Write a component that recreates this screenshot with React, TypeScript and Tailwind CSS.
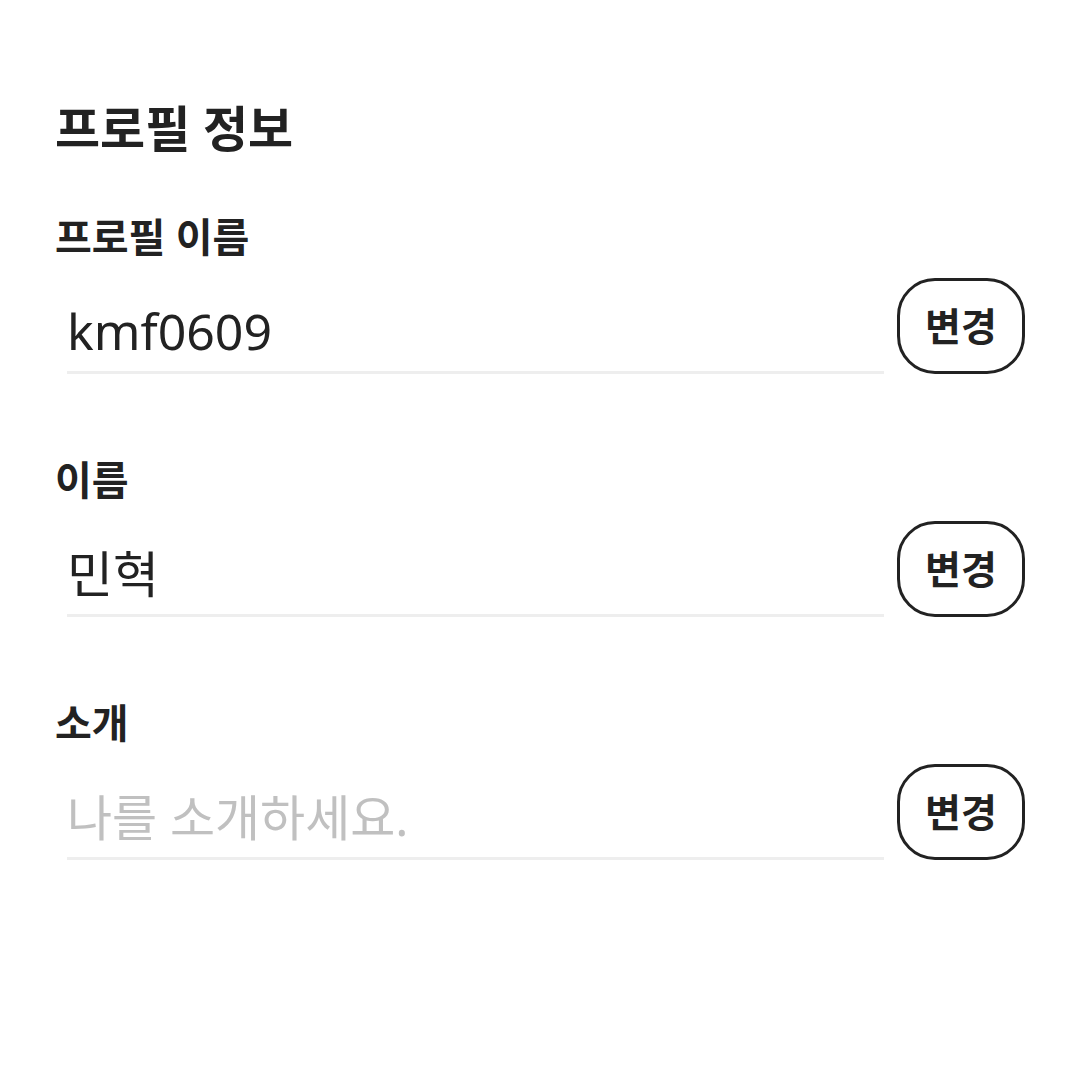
import React from 'react'

const font = { fontFamily: '"Noto Sans", "Noto Sans CJK KR", sans-serif' }

interface FieldProps {
  label: string
  value: string
  placeholder?: string
}

function Field({ label, value, placeholder }: FieldProps) {
  const empty = value.length === 0
  return (
    <section>
      <h2 className="text-[40px] font-semibold leading-[48px] text-[#222222]">{label}</h2>
      <div className="mt-[17px] flex h-[96px] items-end">
        <div className="ml-[12px] mr-[13px] flex-1 border-b-[3px] border-[#eeeeee]">
          <div
            className={
              'h-[93px] pt-[16px] leading-[74px] ' +
              (empty ? 'text-[49px] text-[#c0c0c0]' : 'text-[50px] text-[#222222]')
            }
          >
            {empty ? placeholder : value}
          </div>
        </div>
        <button className="flex h-[96px] w-[128px] items-center justify-center rounded-[38px] border-[3px] border-[#222222] bg-white text-[39px] font-bold text-[#222222]">
          변경
        </button>
      </div>
    </section>
  )
}

export default function App() {
  return (
    <div className="min-h-[1080px] w-[1080px] bg-white px-[55px] pt-[100px]" style={font}>
      <h1 className="text-[49px] font-bold leading-[56px] text-[#222222]">프로필 정보</h1>
      <div className="mt-[57px] flex flex-col gap-[82px]">
        <Field label="프로필 이름" value="kmf0609" />
        <Field label="이름" value="민혁" />
        <Field label="소개" value="" placeholder="나를 소개하세요." />
      </div>
    </div>
  )
}
